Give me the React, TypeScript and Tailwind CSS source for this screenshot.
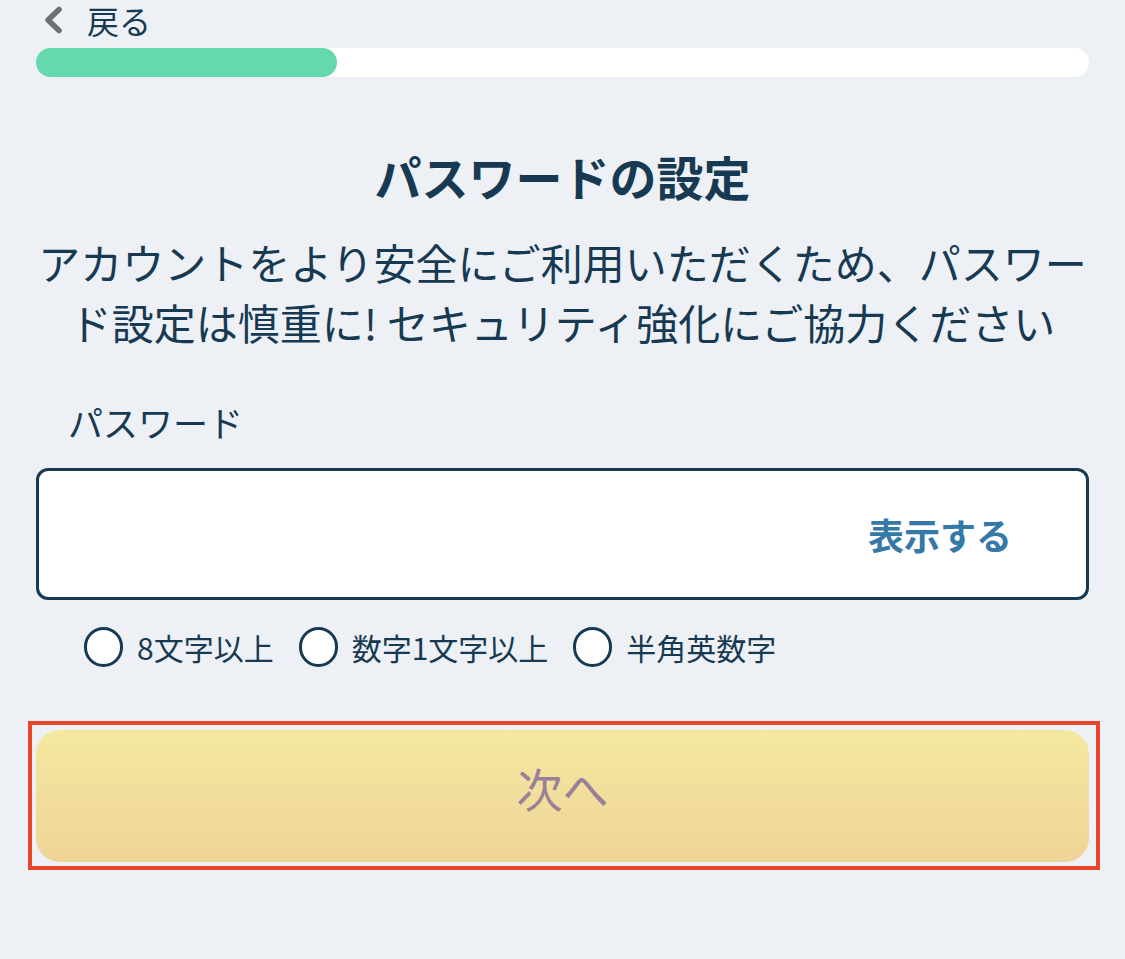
const font = "font-['Noto_Sans_CJK_JP','Noto_Sans',sans-serif]";

const rules = ["8文字以上", "数字1文字以上", "半角英数字"];

export default function App() {
  return (
    <div className={`min-h-[959px] bg-[#edf1f5] px-9 text-[#173a52] ${font}`}>
      {/* back */}
      <div className="flex h-[40px] items-center">
        <svg className="ml-[7px] h-[28px] w-[20px]" viewBox="0 0 20 28" fill="none">
          <path d="M16 3.5 L5 14 L16 24.5" stroke="#6b7177" strokeWidth={5.5} strokeLinecap="round" strokeLinejoin="round" />
        </svg>
        <span className="ml-[24px] text-[32px] leading-[40px]">戻る</span>
      </div>

      {/* progress */}
      <div className="mt-2 h-[29px] w-full rounded-full bg-white">
        <div className="h-full w-[301px] rounded-full bg-[#65d8ae]" />
      </div>

      <h1 className="mt-[69px] text-center text-[47px] font-bold leading-[60px]">パスワードの設定</h1>

      <p className="mt-[26px] text-center text-[42px] leading-[60px] whitespace-nowrap">
        アカウントをより安全にご利用いただくため、パスワー
        <br />
        ド設定は慎重に! セキュリティ強化にご協力ください
      </p>

      <div className="mt-[50px] pl-8 text-[35px] leading-[40px]">パスワード</div>

      <div className="mt-[26px] flex h-[132px] items-center justify-end rounded-[12px] border-[3px] border-[#173a52] bg-white pr-[74px]">
        <button type="button" className="text-[36px] font-bold text-[#3579a8]">
          表示する
        </button>
      </div>

      <ul className="mt-[27px] flex items-center gap-[25px] pl-[48px]">
        {rules.map((r) => (
          <li key={r} className="flex items-center gap-[14px]">
            <span className="h-[40px] w-[39px] rounded-full border-[3px] border-[#173a52] bg-white" />
            <span className="text-[30px] leading-[40px]">{r}</span>
          </li>
        ))}
      </ul>

      <div className="mt-[54px] ml-[-8px] mr-[-11px] border-4 border-[#e8452c] pt-[5px] pb-[4px] pl-[4px] pr-[7px]">
        <button
          type="button"
          className="flex h-[132px] w-full items-center justify-center rounded-[24px] bg-gradient-to-b from-[#f4e8a0] to-[#efd498] pb-[18px] text-[46px] text-[#9a7f98]"
        >
          次へ
        </button>
      </div>
    </div>
  );
}
